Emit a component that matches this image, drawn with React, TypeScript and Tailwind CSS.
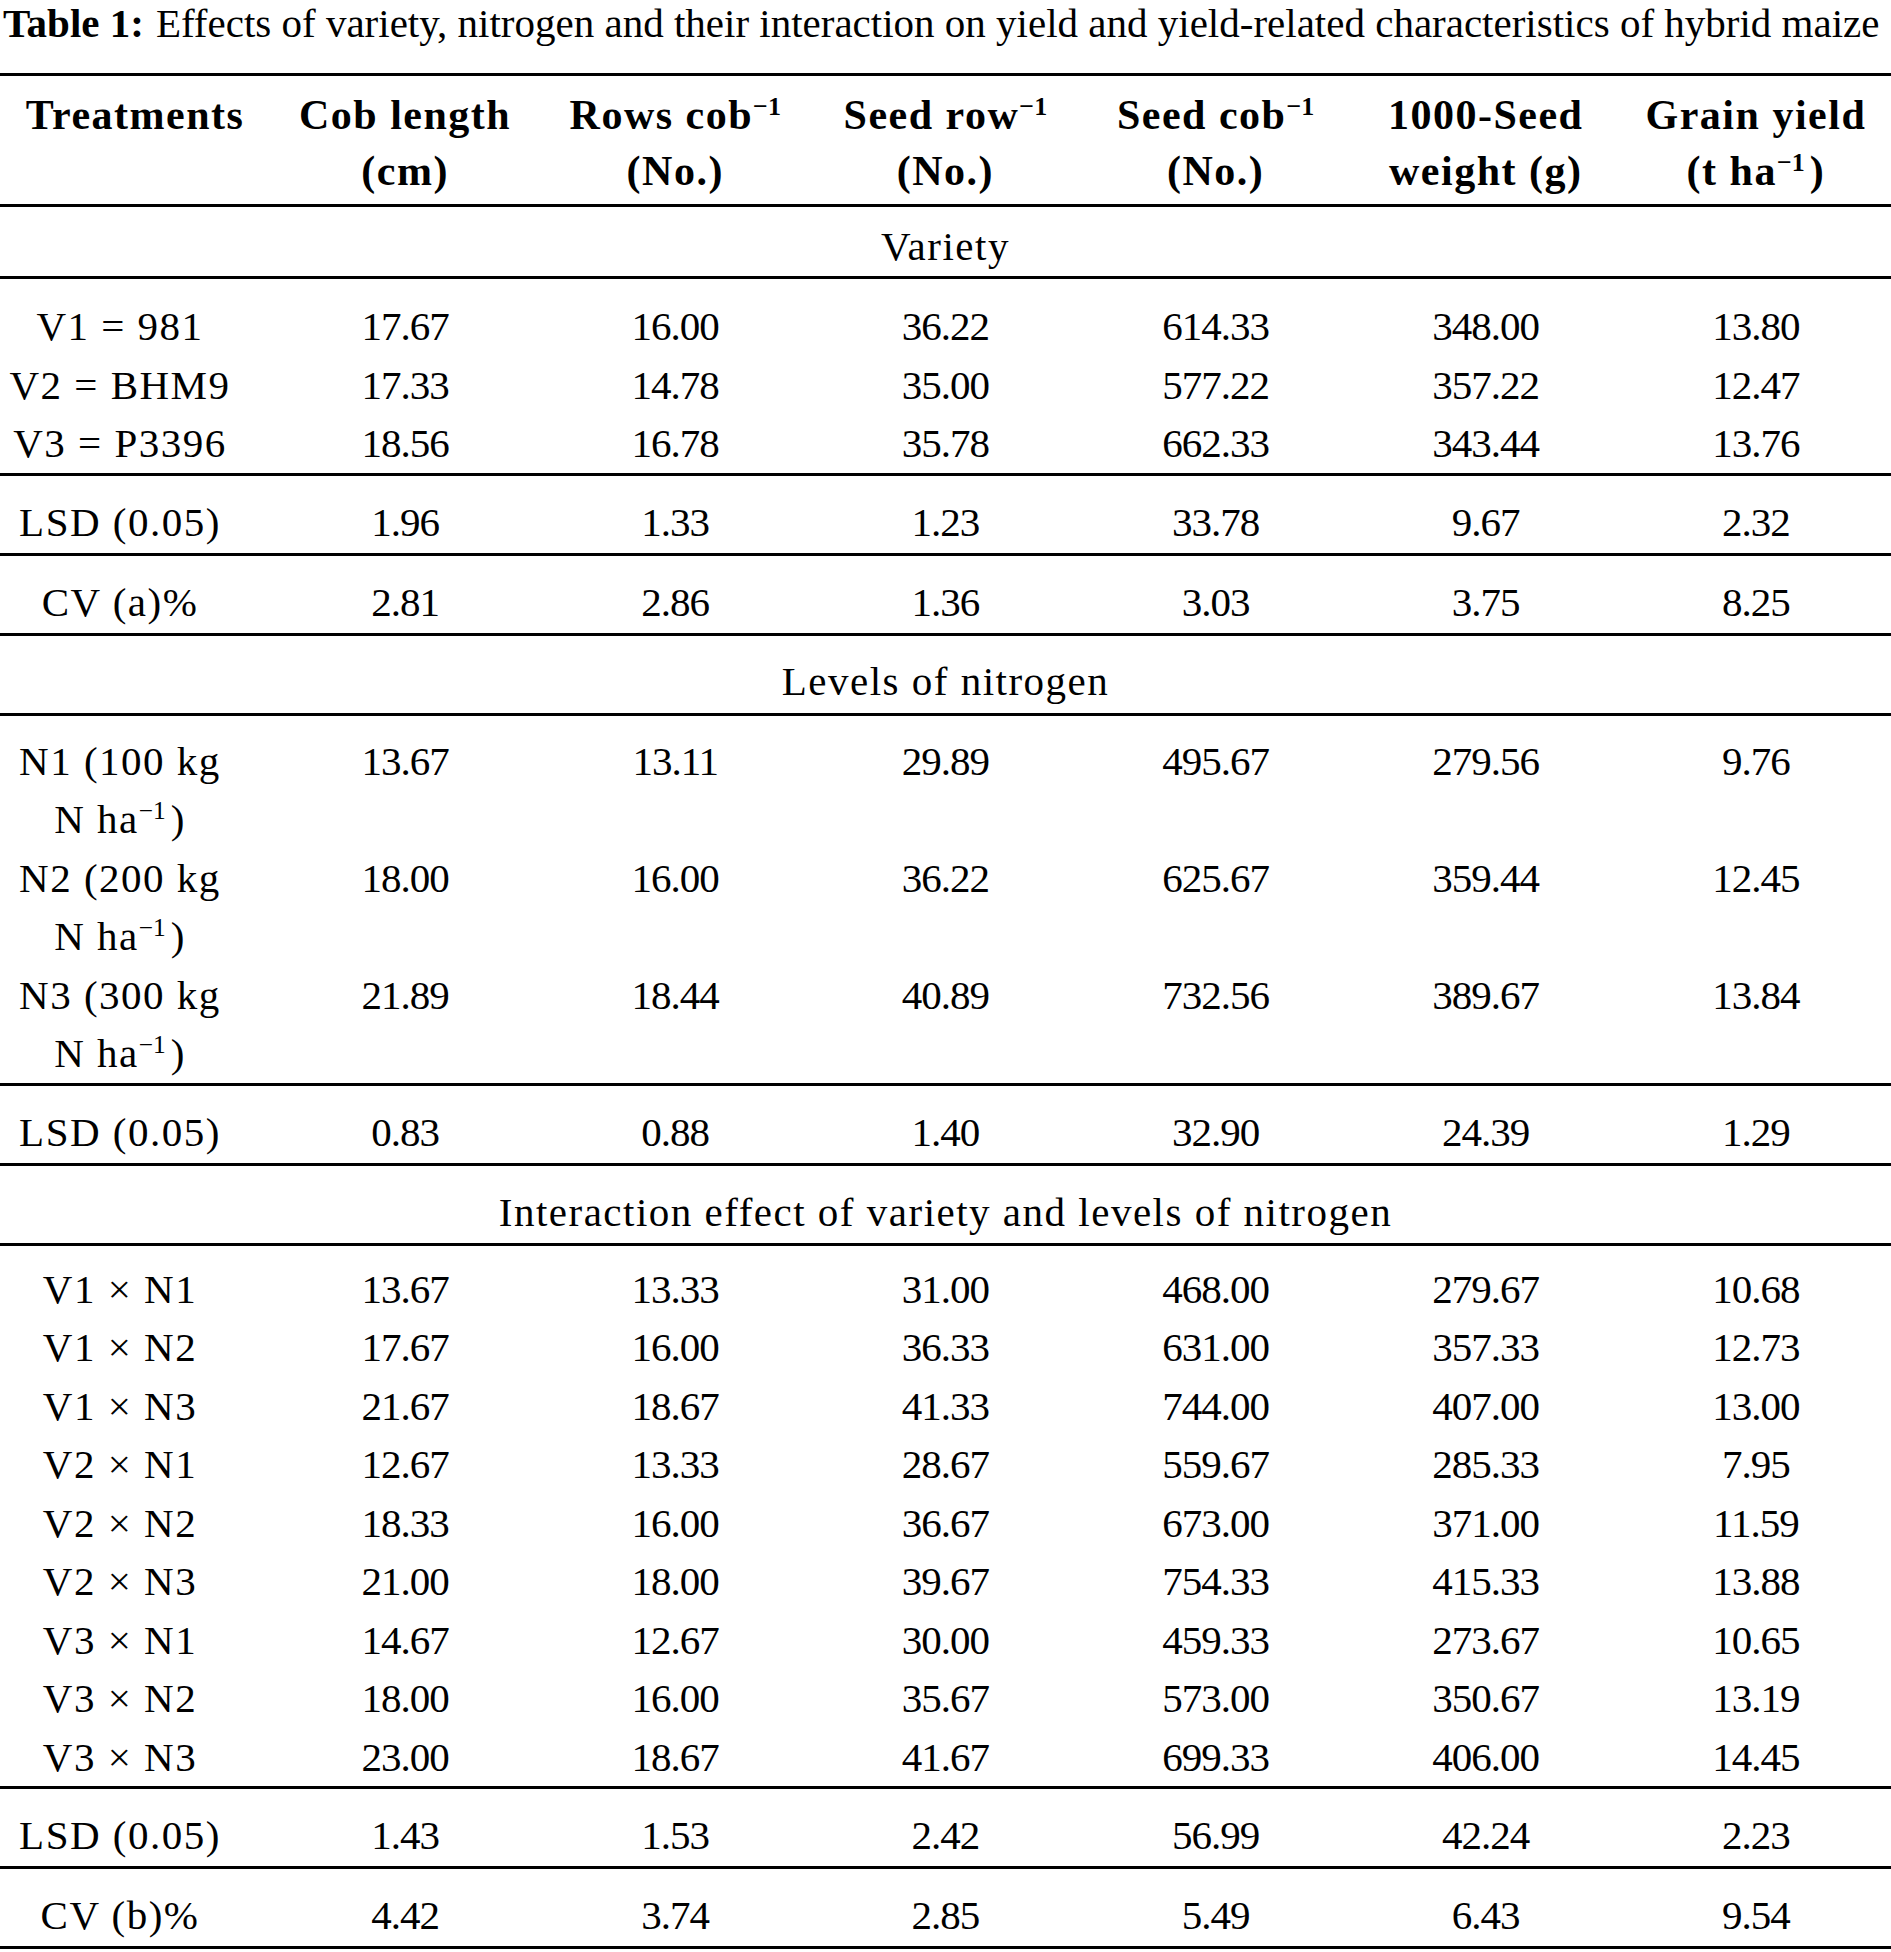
import React from "react";

const cols = "grid grid-cols-[270px_repeat(6,minmax(0,1fr))]";

function Sup({ children }: { children: React.ReactNode }) {
    return <sup className="text-[62%] -top-[0.55em] tracking-normal">{children}</sup>;
}

function Rule() {
    return <div className="h-[3px] bg-black" />;
}

const variety = [
    ["V1 = 981", "17.67", "16.00", "36.22", "614.33", "348.00", "13.80"],
    ["V2 = BHM9", "17.33", "14.78", "35.00", "577.22", "357.22", "12.47"],
    ["V3 = P3396", "18.56", "16.78", "35.78", "662.33", "343.44", "13.76"],
];

const nitrogen = [
    ["N1 (100 kg", "13.67", "13.11", "29.89", "495.67", "279.56", "9.76"],
    ["N2 (200 kg", "18.00", "16.00", "36.22", "625.67", "359.44", "12.45"],
    ["N3 (300 kg", "21.89", "18.44", "40.89", "732.56", "389.67", "13.84"],
];

const interaction = [
    ["V1 × N1", "13.67", "13.33", "31.00", "468.00", "279.67", "10.68"],
    ["V1 × N2", "17.67", "16.00", "36.33", "631.00", "357.33", "12.73"],
    ["V1 × N3", "21.67", "18.67", "41.33", "744.00", "407.00", "13.00"],
    ["V2 × N1", "12.67", "13.33", "28.67", "559.67", "285.33", "7.95"],
    ["V2 × N2", "18.33", "16.00", "36.67", "673.00", "371.00", "11.59"],
    ["V2 × N3", "21.00", "18.00", "39.67", "754.33", "415.33", "13.88"],
    ["V3 × N1", "14.67", "12.67", "30.00", "459.33", "273.67", "10.65"],
    ["V3 × N2", "18.00", "16.00", "35.67", "573.00", "350.67", "13.19"],
    ["V3 × N3", "23.00", "18.67", "41.67", "699.33", "406.00", "14.45"],
];

function DataRow({ row, twoLine }: { row: string[]; twoLine?: boolean }) {
    return (
        <div className={cols}>
            <div className="pr-[30px] text-center tracking-[1.5px]">
                {row[0]}
                {twoLine && (
                    <>
                        <br />
                        N ha<Sup>−1</Sup>&#8202;)
                    </>
                )}
            </div>
            {row.slice(1).map((v, i) => (
                <div key={i} className="text-center tracking-[-1px]">
                    {v}
                </div>
            ))}
        </div>
    );
}

function SingleRow({ row }: { row: string[] }) {
    return (
        <div className="h-[77px] pt-[17px]">
            <DataRow row={row} />
        </div>
    );
}

function SectionLabel({ label, className }: { label: string; className: string }) {
    return <div className={`text-center tracking-[1.5px] ${className}`}>{label}</div>;
}

const headers: React.ReactNode[][] = [
    ["Treatments", ""],
    ["Cob length", "(cm)"],
    [<>Rows cob<Sup>−1</Sup></>, "(No.)"],
    [<>Seed row<Sup>−1</Sup></>, "(No.)"],
    [<>Seed cob<Sup>−1</Sup></>, "(No.)"],
    ["1000-Seed", "weight (g)"],
    [<>Grain yield</>, <>(t ha<Sup>−1</Sup>&#8202;)</>],
];

export default function App() {
    return (
        <div className="w-[1891px] h-[1952px] overflow-hidden bg-white text-black font-['Liberation_Serif','Times_New_Roman',serif]">
            {/* caption */}
            <div className="h-[73px] pl-[3px] text-[41px] leading-[46px] whitespace-nowrap">
                <span className="font-bold">Table 1:</span>
                <span className="ml-[12px]">
                    Effects of variety, nitrogen and their interaction on yield and yield-related characteristics of hybrid maize
                </span>
            </div>
            <Rule />

            {/* column heads */}
            <div className={`${cols} h-[128px] pt-[11px] text-[42px] leading-[56px] font-bold tracking-[1.5px]`}>
                {headers.map((h, i) => (
                    <div key={i} className="text-center">
                        <div>{h[0]}</div>
                        <div>{h[1]}</div>
                    </div>
                ))}
            </div>
            <Rule />

            <div className="text-[41px] leading-[58.5px]">
                <SectionLabel label="Variety" className="h-[69px] pt-[10px]" />
                <Rule />
                <div className="pt-[18px]">
                    {variety.map((r) => (
                        <DataRow key={r[0]} row={r} />
                    ))}
                </div>
                <Rule />
                <SingleRow row={["LSD (0.05)", "1.96", "1.33", "1.23", "33.78", "9.67", "2.32"]} />
                <Rule />
                <SingleRow row={["CV (a)%", "2.81", "2.86", "1.36", "3.03", "3.75", "8.25"]} />
                <Rule />

                <SectionLabel label="Levels of nitrogen" className="h-[77px] pt-[16px]" />
                <Rule />
                <div className="pt-[16px]">
                    {nitrogen.map((r) => (
                        <DataRow key={r[0]} row={r} twoLine />
                    ))}
                </div>
                <Rule />
                <SingleRow row={["LSD (0.05)", "0.83", "0.88", "1.40", "32.90", "24.39", "1.29"]} />
                <Rule />

                <SectionLabel
                    label="Interaction effect of variety and levels of nitrogen"
                    className="h-[77px] pt-[17px]"
                />
                <Rule />
                <div className="pt-[14px]">
                    {interaction.map((r) => (
                        <DataRow key={r[0]} row={r} />
                    ))}
                </div>
                <Rule />
                <SingleRow row={["LSD (0.05)", "1.43", "1.53", "2.42", "56.99", "42.24", "2.23"]} />
                <Rule />
                <SingleRow row={["CV (b)%", "4.42", "3.74", "2.85", "5.49", "6.43", "9.54"]} />
                <Rule />
            </div>
        </div>
    );
}
